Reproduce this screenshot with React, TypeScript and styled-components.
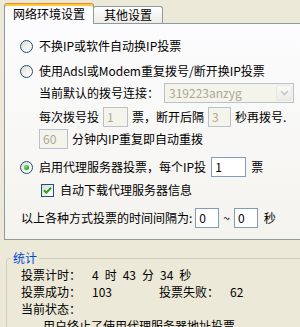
import React from 'react';
import styled, { createGlobalStyle } from 'styled-components';

const GlobalStyle = createGlobalStyle`
  html, body {
    margin: 0;
    padding: 0;
    background: #ECE9D8;
  }
`;

const Window = styled.div`
  width: 300px;
  height: 327px;
  overflow: hidden;
  background: #ECE9D8;
  font-family: "Noto Sans CJK SC", "Noto Sans", sans-serif;
  font-size: 12px;
  color: #000;
`;

// tabs
const TabStrip = styled.div`
  position: relative;
  z-index: 1;
  display: flex;
  align-items: flex-end;
  height: 20px;
  padding: 3px 0 0 4px;
`;

const Tab = styled.div<{ $active?: boolean }>`
  position: relative;
  z-index: ${p => (p.$active ? 2 : 1)};
  box-sizing: border-box;
  display: flex;
  align-items: center;
  height: ${p => (p.$active ? 21 : 17)}px;
  margin-bottom: ${p => (p.$active ? -1 : 0)}px;
  margin-left: ${p => (p.$active ? 0 : -1)}px;
  padding: ${p => (p.$active ? '0 8px 0 8px' : '0 10px 0 10px')};
  border: 1px solid #919B9C;
  border-bottom: none;
  border-top-color: ${p => (p.$active ? '#E68B2C' : '#919B9C')};
  border-radius: 3px 3px 0 0;
  background: ${p => (p.$active ? '#FCFCFE' : 'linear-gradient(#FFFFFF, #ECEBE6)')};
  box-shadow: ${p => (p.$active ? 'inset 0 2px 0 #FFC83C' : 'none')};
  line-height: 16px;
  white-space: nowrap;
`;

const Panel = styled.div`
  width: 310px;
  margin-left: 4px;
  border: 1px solid #919B9C;
  background: linear-gradient(#FCFCFE, #F4F3EE);
  padding: 12px 0 11px 15px;
`;

const OptionRow = styled.div<{ $indent?: number; $top?: number; $gap?: number }>`
  display: flex;
  align-items: center;
  gap: ${p => p.$gap ?? 4}px;
  height: 20px;
  margin-left: ${p => p.$indent ?? 0}px;
  margin-top: ${p => p.$top ?? 0}px;
  white-space: nowrap;
  line-height: 16px;
`;

const Radio = styled.span<{ $checked?: boolean }>`
  box-sizing: border-box;
  display: flex;
  align-items: center;
  justify-content: center;
  width: 13px;
  height: 13px;
  margin-right: 1px;
  border-radius: 50%;
  border: 1px solid #1C5180;
  background: linear-gradient(135deg, #DCD8CA 0%, #F4F3EE 55%, #FFFFFF 100%);
  &::after {
    content: '';
    display: ${p => (p.$checked ? 'block' : 'none')};
    width: 5px;
    height: 5px;
    border-radius: 50%;
    background: radial-gradient(circle at 35% 35%, #7BE27A, #21A121 70%);
  }
`;

const CheckBox = styled.span`
  box-sizing: border-box;
  display: flex;
  align-items: center;
  justify-content: center;
  width: 13px;
  height: 13px;
  margin-right: 1px;
  border: 1px solid #1C5180;
  background: linear-gradient(135deg, #DCD8CA 0%, #F4F3EE 60%, #FFFFFF 100%);
`;

const Field = styled.div<{ $w: number; $disabled?: boolean }>`
  box-sizing: border-box;
  display: flex;
  align-items: center;
  width: ${p => p.$w}px;
  height: 20px;
  padding-left: 3px;
  border: 1px solid ${p => (p.$disabled ? '#B9C2CC' : '#7F9DB9')};
  background: ${p => (p.$disabled ? '#F5F4EA' : '#FFFFFF')};
  color: ${p => (p.$disabled ? '#ACA899' : '#000')};
`;

const Combo = styled.div`
  box-sizing: border-box;
  display: flex;
  align-items: center;
  justify-content: space-between;
  width: 130px;
  height: 20px;
  margin-left: 1px;
  padding: 1px 1px 1px 4px;
  border: 1px solid #B9C2CC;
  background: #F5F4EA;
  color: #ACA899;
`;

const ComboButton = styled.span`
  box-sizing: border-box;
  display: flex;
  align-items: center;
  justify-content: center;
  width: 16px;
  height: 16px;
  border: 1px solid #E8E8E2;
  border-radius: 2px;
  background: linear-gradient(#FAFAF8, #ECEBE4);
`;

const Tilde = styled.span`
  margin: 0 1px;
`;

// stats
const StatBox = styled.fieldset`
  width: 320px;
  margin: 10px 0 0 6px;
  padding: 0 0 10px 4px;
  border: 1px solid #D0D0BF;
  border-radius: 3px;
  min-width: 0;
`;

const StatTitle = styled.legend`
  padding: 0 2px;
  color: #0046D5;
  line-height: 16px;
`;

const StatRow = styled.div<{ $indent?: number }>`
  display: flex;
  align-items: center;
  height: 17px;
  margin-left: ${p => p.$indent ?? 10}px;
  white-space: nowrap;
  line-height: 16px;
`;

const StatLabel = styled.span`
  width: 71px;
  flex: none;
`;

const StatValue = styled.span<{ $w?: number }>`
  display: flex;
  gap: 6px;
  width: ${p => (p.$w ? `${p.$w}px` : 'auto')};
  flex: none;
`;

const Check = () => (
  <svg width="9" height="9" viewBox="0 0 9 9">
    <path d="M1 4.2 L3.4 6.6 L8 1.8" fill="none" stroke="#21A121" strokeWidth="2" />
  </svg>
);

const Chevron = () => (
  <svg width="9" height="6" viewBox="0 0 9 6">
    <path d="M1 1 L4.5 4.5 L8 1" fill="none" stroke="#C3C6CF" strokeWidth="1.6" />
  </svg>
);

export default function App() {
  return (
    <>
      <GlobalStyle />
      <Window>
        <TabStrip>
          <Tab $active>网络环境设置</Tab>
          <Tab>其他设置</Tab>
        </TabStrip>

        <Panel>
          <OptionRow $gap={5}>
            <Radio />
            <span>不换IP或软件自动换IP投票</span>
          </OptionRow>
          <OptionRow $gap={5} $top={5}>
            <Radio />
            <span>使用Adsl或Modem重复拨号/断开换IP投票</span>
          </OptionRow>
          <OptionRow $indent={19} $top={2}>
            <span>当前默认的拨号连接：</span>
            <Combo>
              <span>319223anzyg</span>
              <ComboButton>
                <Chevron />
              </ComboButton>
            </Combo>
          </OptionRow>
          <OptionRow $indent={19} $top={4}>
            <span>每次拨号投</span>
            <Field $w={25} $disabled>1</Field>
            <span>票，断开后隔</span>
            <Field $w={23} $disabled>3</Field>
            <span>秒再拨号.</span>
          </OptionRow>
          <OptionRow $indent={19} $top={2}>
            <Field $w={29} $disabled>60</Field>
            <span>分钟内IP重复即自动重拨</span>
          </OptionRow>
          <OptionRow $gap={5} $top={8}>
            <Radio $checked />
            <span>启用代理服务器投票，每个IP投</span>
            <Field $w={35}>1</Field>
            <span>票</span>
          </OptionRow>
          <OptionRow $indent={21} $gap={5} $top={3}>
            <CheckBox>
              <Check />
            </CheckBox>
            <span>自动下载代理服务器信息</span>
          </OptionRow>
          <OptionRow $indent={1} $top={8} $gap={3}>
            <span>以上各种方式投票的时间间隔为:</span>
            <Field $w={24}>0</Field>
            <Tilde>~</Tilde>
            <Field $w={24}>0</Field>
            <span>&nbsp;秒</span>
          </OptionRow>
        </Panel>

        <StatBox>
          <StatTitle>统计</StatTitle>
          <StatRow>
            <StatLabel>投票计时：</StatLabel>
            <StatValue>
              <span>4</span>
              <span>时</span>
              <span>43</span>
              <span>分</span>
              <span>34</span>
              <span>秒</span>
            </StatValue>
          </StatRow>
          <StatRow>
            <StatLabel>投票成功：</StatLabel>
            <StatValue $w={67}>103</StatValue>
            <StatLabel>投票失败：</StatLabel>
            <StatValue>62</StatValue>
          </StatRow>
          <StatRow>
            <StatLabel>当前状态：</StatLabel>
          </StatRow>
          <StatRow $indent={32}>用户终止了使用代理服务器地址投票。</StatRow>
        </StatBox>
      </Window>
    </>
  );
}
